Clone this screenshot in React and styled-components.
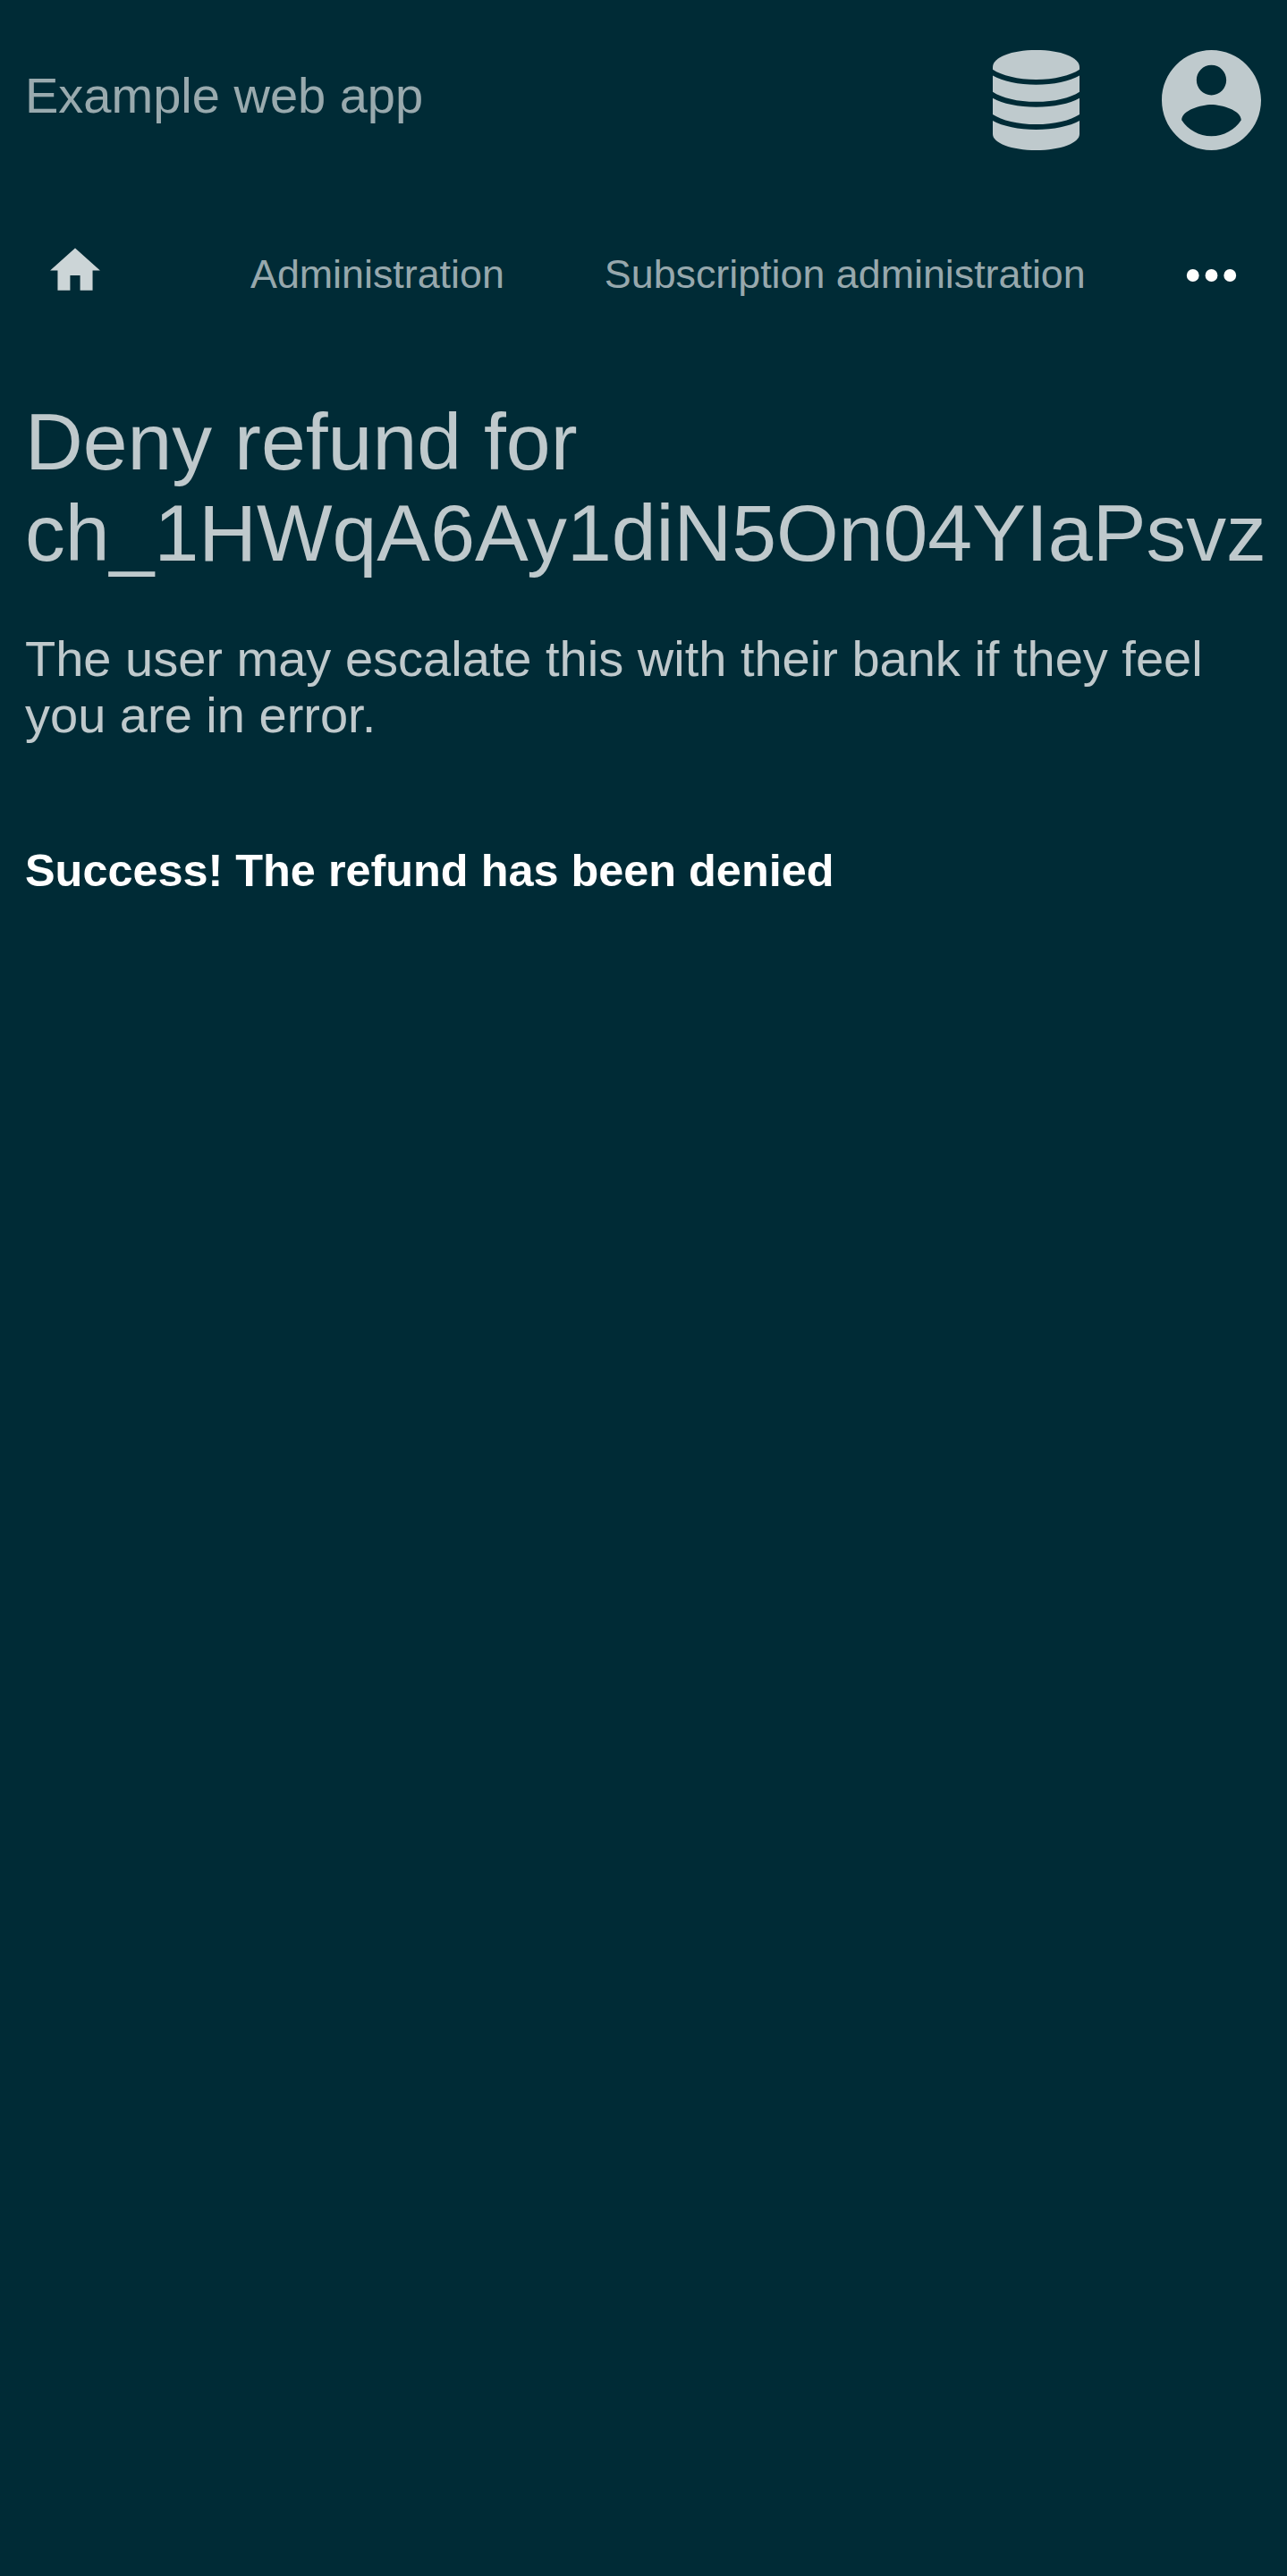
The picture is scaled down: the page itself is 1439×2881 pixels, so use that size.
import React from "react";
import styled, { createGlobalStyle } from "styled-components";

const GlobalStyle = createGlobalStyle`
  html, body { margin: 0; background: #002b36; }
  body { font-family: "Liberation Sans", Arial, sans-serif; color: rgba(255, 255, 255, 0.75); }
`;

const Page = styled.div`
  min-height: 2881px;
  box-sizing: border-box;
  padding: 0 29px 0 28px;
  overflow: hidden;
`;

const Header = styled.header`
  display: flex;
  align-items: center;
  height: 224px;
`;

const AppTitle = styled.div`
  flex: 1;
  margin-bottom: 11px;
  font-size: 56px;
  line-height: 63px;
  color: rgba(255, 255, 255, 0.6);
`;

const HeaderIcon = styled.svg`
  display: block;
  width: ${(p) => p.$width}px;
  height: 112px;
  margin-left: ${(p) => p.$gap || 0}px;
  fill: #bfcacd;
`;

const Nav = styled.nav`
  display: flex;
  align-items: flex-start;
  height: 166px;
  padding-top: 45px;
  box-sizing: border-box;
`;

const NavItem = styled.a`
  margin-left: ${(p) => p.$gap}px;
  padding-top: 12px;
  font-size: 44.8px;
  line-height: 51px;
  white-space: nowrap;
  color: rgba(255, 255, 255, 0.6);
`;

const HomeIcon = styled.svg`
  display: block;
  width: 68px;
  height: 67px;
  margin-left: 22px;
  fill: #ccd5d7;
`;

const MoreIcon = styled.svg`
  display: block;
  width: 83px;
  height: 84px;
  margin: -3px 14px 0 auto;
  fill: #fff;
`;

const Heading = styled.h1`
  margin: 53px -20px 0 0;
  font-size: 89.6px;
  line-height: 102px;
  font-weight: 400;
`;

const Description = styled.p`
  margin: 58px 0 0;
  font-size: 56px;
  line-height: 63px;
`;

const Message = styled.p`
  margin: 114px 0 0;
  font-size: 50.4px;
  line-height: 57px;
  font-weight: 700;
  color: #fff;
`;

export default function App() {
  return (
    <Page>
      <GlobalStyle />
      <Header>
        <AppTitle>Example web app</AppTitle>
        <HeaderIcon $width={97} viewBox="0 0 97 112">
          <path d="M0 19C0 8 21 0 48.500 0S97 8 97 19V21.800C87 28.500 69 33 48.500 33S10 28.500 0 21.800Z" />
          <path d="M0 28.500C11 35 29 38.700 48.500 38.700S86 35 97 28.500V46.700C87 53.500 69 57.800 48.500 57.800S10 53.500 0 46.700Z" />
          <path d="M0 53.700C11 60 29 63.700 48.500 63.700S86 60 97 53.700V71.900C87 78.500 69 83 48.500 83S10 78.500 0 71.900Z" />
          <path d="M0 78.900C11 85 29 88.900 48.500 88.900S86 85 97 78.900V94C97 104 76 112 48.500 112S0 104 0 94Z" />
        </HeaderIcon>
        <HeaderIcon $width={111} $gap={92} viewBox="2 2 20 20" preserveAspectRatio="none">
          <path d="M12 2C6.480 2 2 6.480 2 12s4.480 10 10 10 10-4.480 10-10S17.520 2 12 2zm0 3c1.660 0 3 1.340 3 3s-1.340 3-3 3-3-1.340-3-3 1.340-3 3-3zm0 14.200c-2.500 0-4.710-1.280-6-3.220.03-1.990 4-3.080 6-3.080 1.990 0 5.970 1.090 6 3.080-1.290 1.940-3.500 3.220-6 3.220z" />
        </HeaderIcon>
      </Header>
      <Nav>
        <HomeIcon viewBox="0 0 24 24">
          <path d="M10 20v-6h4v6h5v-8h3L12 3 2 12h3v8z" />
        </HomeIcon>
        <NavItem $gap={162}>Administration</NavItem>
        <NavItem $gap={112}>Subscription administration</NavItem>
        <MoreIcon viewBox="0 0 24 24" preserveAspectRatio="none">
          <circle cx="6" cy="12" r="2" />
          <circle cx="12" cy="12" r="2" />
          <circle cx="18" cy="12" r="2" />
        </MoreIcon>
      </Nav>
      <Heading>Deny refund for ch_1HWqA6Ay1diN5On04YIaPsvz</Heading>
      <Description>The user may escalate this with their bank if they feel you are in error.</Description>
      <Message>Success! The refund has been denied</Message>
    </Page>
  );
}
